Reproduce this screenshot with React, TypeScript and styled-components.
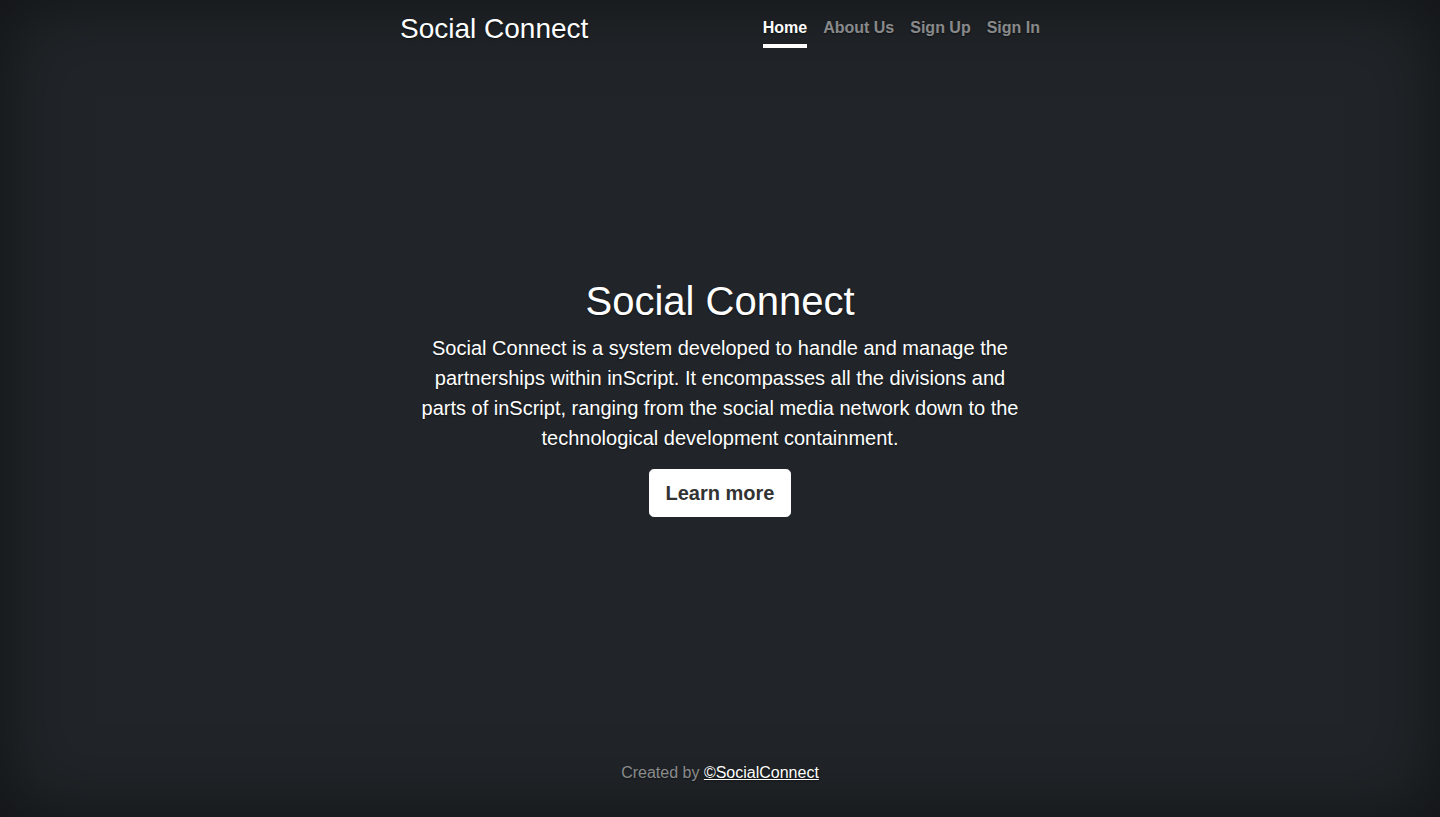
import React from "react";
import styled, { createGlobalStyle } from "styled-components";

const GlobalStyle = createGlobalStyle`
  html, body, #root { height: 100%; }
  body {
    margin: 0;
    font-family: "Liberation Sans", Arial, Helvetica, sans-serif;
    background: #212529;
    color: #fff;
  }
  * { box-sizing: border-box; }
`;

const Page = styled.div`
  height: 100%;
  display: flex;
  text-align: center;
  background: #212529;
  color: #fff;
  box-shadow: inset 0 0 5rem rgba(0, 0, 0, 0.5);
  text-shadow: 0 0.05rem 0.1rem rgba(0, 0, 0, 0.5);
`;

const Cover = styled.div`
  display: flex;
  flex-direction: column;
  width: 100%;
  max-width: 42em;
  height: 100%;
  padding: 12px 16px 16px;
  margin: 0 auto;
`;

const Header = styled.header`
  display: flex;
  justify-content: space-between;
  align-items: flex-start;
  margin-bottom: auto;
`;

const Brand = styled.h3`
  margin: 0;
  font-size: 28px;
  font-weight: 400;
  line-height: 1.2;
`;

const Nav = styled.nav`
  display: flex;
  gap: 16px;
`;

const NavLink = styled.a<{ $active?: boolean }>`
  display: block;
  padding: 4px 0;
  font-size: 16px;
  line-height: 24px;
  font-weight: 700;
  text-decoration: none;
  color: ${(p) => (p.$active ? "#fff" : "rgba(255, 255, 255, 0.5)")};
  border-bottom: 4px solid ${(p) => (p.$active ? "#fff" : "transparent")};
  cursor: pointer;
`;

const Main = styled.main`
  padding: 0 16px 16px;
`;

const Title = styled.h1`
  margin: 0 0 8px;
  font-size: 40px;
  font-weight: 400;
  line-height: 1.2;
`;

const Lead = styled.p`
  margin: 0 0 16px;
  font-size: 20px;
  font-weight: 300;
  line-height: 30px;
`;

const Button = styled.a`
  display: inline-block;
  padding: 8px 16px;
  font-size: 20px;
  line-height: 30px;
  font-weight: 700;
  color: #333333;
  background: #fff;
  border: 1px solid #fff;
  border-radius: 4.8px;
  text-decoration: none;
  text-shadow: none;
  cursor: pointer;
`;

const Footer = styled.footer`
  margin-top: auto;
  color: rgba(255, 255, 255, 0.5);
`;

const FooterText = styled.p`
  margin: 0 0 16px;
  font-size: 16px;
  line-height: 24px;
`;

const FooterLink = styled.a`
  color: #fff;
  text-decoration: underline;
`;

export default function App() {
  return (
    <>
      <GlobalStyle />
      <Page>
        <Cover>
          <Header>
            <Brand>Social Connect</Brand>
            <Nav>
              <NavLink $active>Home</NavLink>
              <NavLink>About Us</NavLink>
              <NavLink>Sign Up</NavLink>
              <NavLink>Sign In</NavLink>
            </Nav>
          </Header>
          <Main>
            <Title>Social Connect</Title>
            <Lead>
              Social Connect is a system developed to handle and manage the
              partnerships within inScript. It encompasses all the divisions and
              parts of inScript, ranging from the social media network down to the
              technological development containment.
            </Lead>
            <Button>Learn more</Button>
          </Main>
          <Footer>
            <FooterText>
              Created by <FooterLink>©SocialConnect</FooterLink>
            </FooterText>
          </Footer>
        </Cover>
      </Page>
    </>
  );
}
